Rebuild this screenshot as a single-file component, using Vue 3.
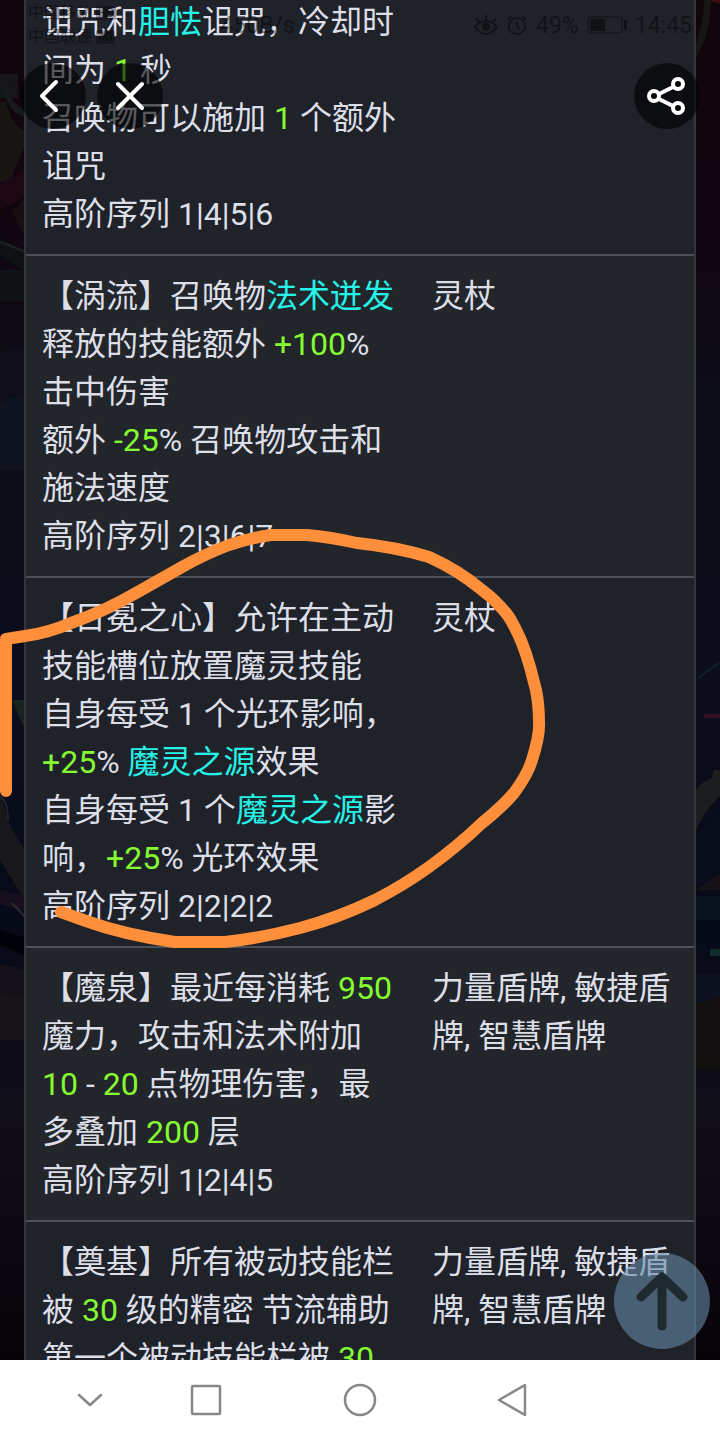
<script setup>
import { ref } from "vue";

// each line is a list of parts: plain text, or [class, text]
const rows = ref([
  {
    lines: [
      ["诅咒和", ["key", "胆怯"], "诅咒，冷却时"],
      ["间为 ", ["num", "1"], " 秒"],
      ["召唤物可以施加 ", ["num", "1"], " 个额外"],
      ["诅咒"],
      ["高阶序列 1|4|5|6"],
    ],
    slots: "",
  },
  {
    lines: [
      ["【涡流】召唤物", ["key", "法术迸发"]],
      ["释放的技能额外 ", ["num", "+100"], "%"],
      ["击中伤害"],
      ["额外 ", ["num", "-25"], "% 召唤物攻击和"],
      ["施法速度"],
      ["高阶序列 2|3|6|7"],
    ],
    slots: "灵杖",
  },
  {
    lines: [
      ["【日冕之心】允许在主动"],
      ["技能槽位放置魔灵技能"],
      ["自身每受 1 个光环影响，"],
      [["num", "+25"], "% ", ["key", "魔灵之源"], "效果"],
      ["自身每受 1 个", ["key", "魔灵之源"], "影"],
      ["响，", ["num", "+25"], "% 光环效果"],
      ["高阶序列 2|2|2|2"],
    ],
    slots: "灵杖",
  },
  {
    lines: [
      ["【魔泉】最近每消耗 ", ["num", "950"]],
      ["魔力，攻击和法术附加"],
      [["num", "10"], " - ", ["num", "20"], " 点物理伤害，最"],
      ["多叠加 ", ["num", "200"], " 层"],
      ["高阶序列 1|2|4|5"],
    ],
    slots: "力量盾牌, 敏捷盾牌, 智慧盾牌",
  },
  {
    lines: [
      ["【奠基】所有被动技能栏"],
      ["被 ", ["num", "30"], " 级的精密 节流辅助"],
      ["第一个被动技能栏被 ", ["num", "30"]],
    ],
    slots: "力量盾牌, 敏捷盾牌, 智慧盾牌",
  },
]);

const partClass = (part) => (Array.isArray(part) ? part[0] : "");
const partText = (part) => (Array.isArray(part) ? part[1] : part);
</script>

<template>
  <div class="screen">
    <main class="content">
      <svg class="backdrop" viewBox="0 0 720 1360" preserveAspectRatio="none" aria-hidden="true">
        <path d="M0 74H18V98H0z" fill="#171b1b" />
        <path d="M0 102H6Q10 124 26 132V142L10 182H0z" fill="#1b1914" />
        <path d="M3 86Q6 112 26 118V110Q10 104 8 86z" fill="#18201f" />
        <path d="M0 184L26 170V196L0 210z" fill="#1e0914" />
        <path d="M12 212L26 196V240z" fill="#1a1113" />
        <path d="M0 238L26 252V272L0 256z" fill="#0e1414" />
        <path d="M0 270H26V302H0z" fill="#101617" />
        <path d="M0 242L26 252" stroke="#222927" stroke-width="2" />
        <path d="M0 352L26 346V392L0 400z" fill="#130f1e" />
        <path d="M0 402L26 392V470H0z" fill="#101522" />
        <path d="M12 700H26V732z" fill="#1c2920" />
        <path d="M0 794L10 826L26 852V902L0 860z" fill="#1d1c1b" />
        <path d="M0 796Q8 802 8 820" fill="none" stroke="#282b2c" stroke-width="2" />
        <path d="M0 890L26 896V912L0 904z" fill="#1c0f20" />
        <path d="M12 903L26 918" stroke="#303234" stroke-width="2" />
        <path d="M0 930L26 938V956L0 945z" fill="#010207" />
        <path d="M0 964L26 970V998L0 992z" fill="#18131a" />
        <path d="M0 992L26 998V1040H0z" fill="#1b1617" />
        <path d="M694 48Q704 26 704 0H711Q710 38 694 60z" fill="#1a1b16" />
        <path d="M708 0H720V4z" fill="#431013" />
        <path d="M698 678L720 662" stroke="#142632" stroke-width="2" />
        <path d="M704 714H720V718H704z" fill="#420d27" />
        <path d="M714 770H720V784H710z" fill="#25211f" />
        <path d="M694 792Q702 780 720 774V796Q702 812 694 836z" fill="#202320" />
        <path d="M694 840L720 812V870L694 888z" fill="#080e1d" />
        <path d="M694 892L720 872V890H694z" fill="#191517" />
        <path d="M694 896H720V920H694z" fill="#07141f" />
        <path d="M710 949H720V956H710z" fill="#123531" />
        <path d="M694 974H720V996L694 1004z" fill="#0f1321" />
        <path d="M694 1004L720 996V1070H694z" fill="#15110f" />
      </svg>

      <table class="affixes">
        <tbody>
          <tr v-for="(row, i) in rows" :key="i">
            <td class="affix">
              <div v-for="(line, j) in row.lines" :key="j" class="line">
                <span v-for="(part, k) in line" :key="k" :class="partClass(part)">{{ partText(part) }}</span>
              </div>
            </td>
            <td>{{ row.slots }}</td>
          </tr>
        </tbody>
      </table>

      <header class="status">
        <div class="carriers">
          <div class="carrier">中国移动 <span class="badge">HD</span></div>
          <div class="carrier">中国联通 <span class="badge">4G</span></div>
        </div>
        <span class="speed">450B/s</span>
        <div class="indicators">
          <svg width="24" height="24" viewBox="0 0 24 24" fill="none" stroke="currentColor" stroke-width="2">
            <path d="M1 14Q6 8 12 8T23 14Q18 21 12 21T1 14zM12 7V2M5 9L2 5M19 9L22 5" />
            <circle cx="12" cy="14" r="4" fill="currentColor" stroke="none" />
          </svg>
          <svg width="22" height="22" viewBox="0 0 24 24" fill="none" stroke="currentColor" stroke-width="2">
            <circle cx="12" cy="13" r="9" />
            <path d="M12 8V13L15 17M2 6L6 2M22 6L18 2" />
          </svg>
          <span>49%</span>
          <svg width="40" height="18" viewBox="0 0 40 18">
            <rect x="1" y="1" width="34" height="16" rx="2" fill="none" stroke="currentColor" />
            <path d="M3 3H18V15H3zM37 4H40V14H37z" fill="currentColor" />
          </svg>
          <span>14:45</span>
        </div>
      </header>

      <div class="toolbar">
        <button class="round" aria-label="返回">
          <svg width="66" height="66" viewBox="0 0 66 66">
            <path d="M36 19L22 33L36 47" />
          </svg>
        </button>
        <button class="round" aria-label="关闭">
          <svg width="66" height="66" viewBox="0 0 66 66">
            <path d="M21 21L45 45M45 21L21 45" />
          </svg>
        </button>
        <button class="round share" aria-label="分享">
          <svg width="66" height="66" viewBox="0 0 66 66">
            <path d="M25 31L39 24M25 36L39 43" />
            <circle cx="20" cy="33" r="5" />
            <circle cx="44" cy="21" r="5" />
            <circle cx="44" cy="45" r="5" />
          </svg>
        </button>
      </div>

      <button class="to-top" aria-label="回到顶部">
        <svg width="96" height="96" viewBox="0 0 96 96">
          <path d="M48 73V25M27 44L48 24L69 44" />
        </svg>
      </button>

      <svg class="marker" viewBox="0 0 720 1360" aria-hidden="true">
        <path
          d="M61 912L86 921Q125 935 175 942H225Q262 938 300 928T375 900Q404 885 429 867Q458 846 482 823
             Q502 807 514 793Q528 774 532 760Q540 735 539 722Q539 705 536 690L530 667Q522 638 509 617
             Q498 602 482 590Q458 570 429 557Q396 547 357 543Q330 537 307 535H271Q250 538 229 545
             Q205 554 182 567L136 593Q105 611 71 623Q48 633 25 636L6 639V791"
        />
      </svg>
    </main>

    <nav class="system-nav">
      <button aria-label="收起">
        <svg width="36" height="36" viewBox="0 0 36 36"><path d="M7 13L18 23L29 13" /></svg>
      </button>
      <button aria-label="最近任务">
        <svg width="36" height="36" viewBox="0 0 36 36"><rect x="4" y="4" width="28" height="28" rx="1" /></svg>
      </button>
      <button aria-label="主页">
        <svg width="36" height="36" viewBox="0 0 36 36"><circle cx="18" cy="18" r="15" /></svg>
      </button>
      <button aria-label="后退">
        <svg width="36" height="36" viewBox="0 0 36 36"><path d="M5 18L31 3V33z" /></svg>
      </button>
    </nav>
  </div>
</template>

<style>
body {
  margin: 0;
}
</style>

<style scoped>
.screen {
  display: flex;
  flex-direction: column;
  height: 100vh;
  font-family: Roboto, "Noto Sans CJK SC", sans-serif;
}

.content {
  position: relative;
  flex: 1;
  min-height: 0;
  padding: 0 24px;
  overflow: hidden;
  background: linear-gradient(#12060c, #12040f 15%, #0b0d17 30%, #0b0d1c 50%, #060a18 68%, #100d17 82%, #080309);
}

.backdrop {
  position: absolute;
  inset: 0;
  width: 100%;
  height: 100%;
  opacity: 0.8;
}

/* the list is scrolled a little past the top of its first row */
.affixes {
  position: relative;
  width: 100%;
  margin-top: -18px;
  table-layout: fixed;
  border-collapse: separate;
  border-spacing: 0;
  border: solid #35373b;
  border-width: 0 2px;
  color: #dcdfe8;
  font-size: 32px;
  line-height: 48px;
}

.affixes tr {
  background: #1f2229;
}

.affixes tr:nth-child(even) {
  background: #222529;
}

.affixes td {
  box-sizing: border-box;
  padding: 16px;
  border-bottom: 2px solid #4d5057;
  vertical-align: top;
}

.affixes .affix {
  width: 58.4%;
}

.line {
  white-space: pre;
}

.num {
  color: #85fb32;
}

.key {
  color: #25f2e8;
}

.status {
  position: absolute;
  top: 0;
  left: 0;
  right: 0;
  display: flex;
  align-items: center;
  height: 50px;
  padding: 0 28px;
  color: rgba(0, 0, 0, 0.45);
  font-size: 23px;
}

.carrier {
  display: flex;
  align-items: center;
  gap: 4px;
  font-size: 16px;
  line-height: 24px;
}

.badge {
  padding: 0 2px;
  border-radius: 2px;
  background: rgba(0, 0, 0, 0.3);
  font-size: 12px;
  line-height: 14px;
}

.speed {
  margin-left: 104px;
}

.indicators {
  display: flex;
  align-items: center;
  gap: 8px;
  margin-left: auto;
}

.toolbar {
  position: absolute;
  top: 63px;
  left: 20px;
  right: 20px;
  display: flex;
  gap: 11px;
}

button {
  padding: 0;
  border: none;
  background: none;
  cursor: pointer;
}

button svg {
  display: block;
  fill: none;
  stroke-linecap: round;
  stroke-linejoin: round;
}

.round {
  border-radius: 50%;
  background: rgba(0, 0, 0, 0.6);
}

.round svg {
  stroke: #fff;
  stroke-width: 4;
}

.share {
  margin-left: auto;
}

.to-top {
  position: absolute;
  right: 10px;
  bottom: 11px;
  border-radius: 50%;
  background: rgba(102, 137, 166, 0.6);
}

.to-top svg {
  stroke: #1f2930;
  stroke-width: 9;
}

.marker {
  position: absolute;
  top: 0;
  left: 0;
  width: 100%;
  fill: none;
  stroke: #ff8f3a;
  stroke-width: 12;
  stroke-linecap: round;
  stroke-linejoin: round;
  pointer-events: none;
}

.system-nav {
  display: grid;
  grid-template-columns: 116fr 116fr 192fr 112fr 152fr;
  align-items: center;
  justify-items: center;
  height: 80px;
  padding-left: 32px;
  background: #fff;
}

.system-nav svg {
  stroke: #878787;
  stroke-width: 2.5;
}
</style>
